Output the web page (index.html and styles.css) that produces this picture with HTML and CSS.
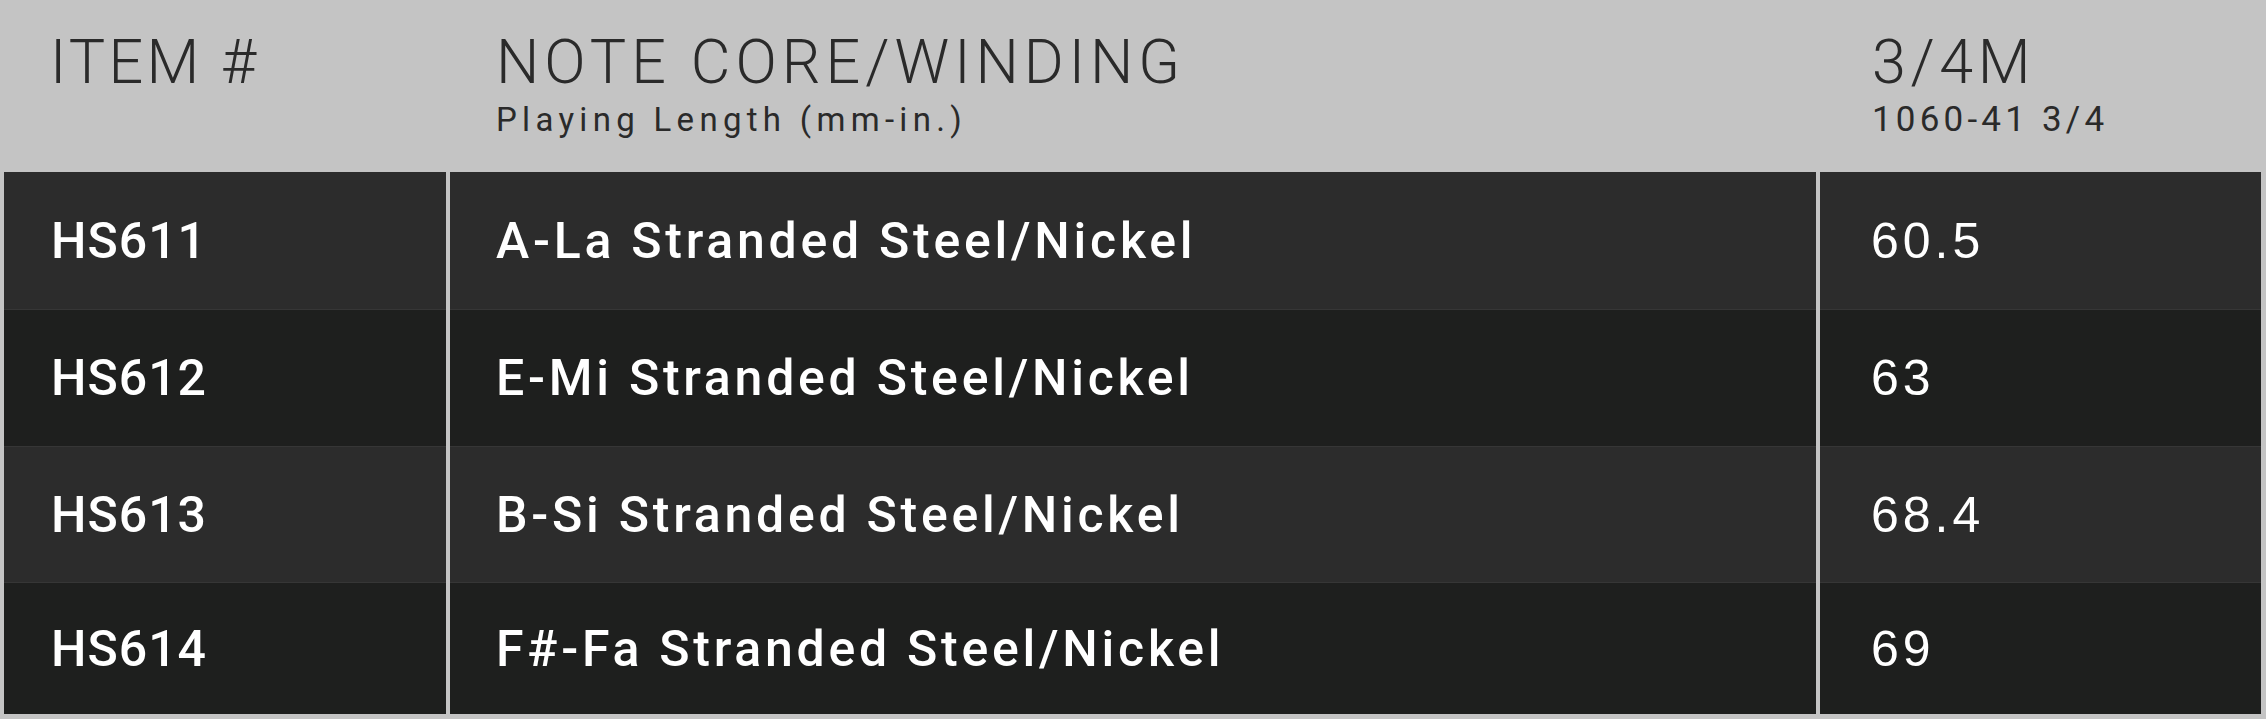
FILE: index.html
```html
<!DOCTYPE html>
<html lang="en">
<head>
<meta charset="utf-8">
<title>Strings table</title>
<link rel="stylesheet" href="styles.css">
</head>
<body>
<table class="spec">
  <colgroup>
    <col class="col-item">
    <col class="col-note">
    <col class="col-size">
  </colgroup>
  <thead>
    <tr>
      <th class="item"><div class="h-main">ITEM #</div></th>
      <th class="note"><div class="h-main">NOTE CORE/WINDING</div><div class="h-sub">Playing Length (mm-in.)</div></th>
      <th class="size"><div class="h-main">3/4M</div><div class="h-sub num">1060-41 3/4</div></th>
    </tr>
  </thead>
  <tbody>
    <tr class="odd">
      <td class="item">HS611</td>
      <td class="note">A-La Stranded Steel/Nickel</td>
      <td class="size">60.5</td>
    </tr>
    <tr class="even">
      <td class="item">HS612</td>
      <td class="note">E-Mi Stranded Steel/Nickel</td>
      <td class="size">63</td>
    </tr>
    <tr class="odd">
      <td class="item">HS613</td>
      <td class="note">B-Si Stranded Steel/Nickel</td>
      <td class="size">68.4</td>
    </tr>
    <tr class="even">
      <td class="item">HS614</td>
      <td class="note">F#-Fa Stranded Steel/Nickel</td>
      <td class="size">69</td>
    </tr>
  </tbody>
</table>
</body>
</html>
```

FILE: styles.css
```css
* { box-sizing: border-box; }

html, body {
  margin: 0;
  padding: 0;
  background: #c4c4c4;
}

body {
  width: 2266px;
  height: 719px;
  overflow: hidden;
}

.spec {
  border-collapse: separate;
  border-spacing: 4px 0;
  table-layout: fixed;
  width: 2265px;
}

.col-item { width: 442px; }
.col-note { width: 1366px; }
.col-size { width: 441px; }

.spec th {
  height: 172px;
  padding: 32px 0 0 46px;
  vertical-align: top;
  text-align: left;
  font-weight: 300;
  color: #2a2a2a;
  font-family: Roboto, "Liberation Sans", sans-serif;
}

.h-main {
  font-size: 61px;
  line-height: 60px;
  letter-spacing: 3.3px;
}

.spec th.note .h-main {
  letter-spacing: 5px;
}

.spec th.size {
  padding-left: 52px;
}

.spec th.size .h-main {
  letter-spacing: 4.6px;
}

.h-sub {
  margin-top: 11px;
  font-size: 33px;
  line-height: 33px;
  letter-spacing: 5.3px;
  font-weight: 400;
}

.h-sub.num {
  font-size: 35px;
  letter-spacing: 4.2px;
}

.spec td {
  height: 137px;
  padding: 0 0 0 46px;
  vertical-align: middle;
  color: #ffffff;
  font-family: Roboto, "Liberation Sans", sans-serif;
  font-size: 50px;
  font-weight: 500;
  line-height: 56px;
}

.spec tbody tr:nth-child(3) td { height: 136px; }
.spec tbody tr:last-child td { height: 132px; }

.spec tbody tr + tr td {
  border-top: 1px solid #363636;
}

.spec tr.odd td { background: #2c2c2c; }
.spec tr.even td { background: #1e1f1e; }

.spec td.item {
  padding-left: 47px;
  letter-spacing: 1px;
}

.spec td.note {
  letter-spacing: 3.75px;
}

.spec td.size {
  padding-left: 51px;
  font-family: "Liberation Sans", Arial, sans-serif;
  font-weight: 400;
  letter-spacing: 4px;
}
```
